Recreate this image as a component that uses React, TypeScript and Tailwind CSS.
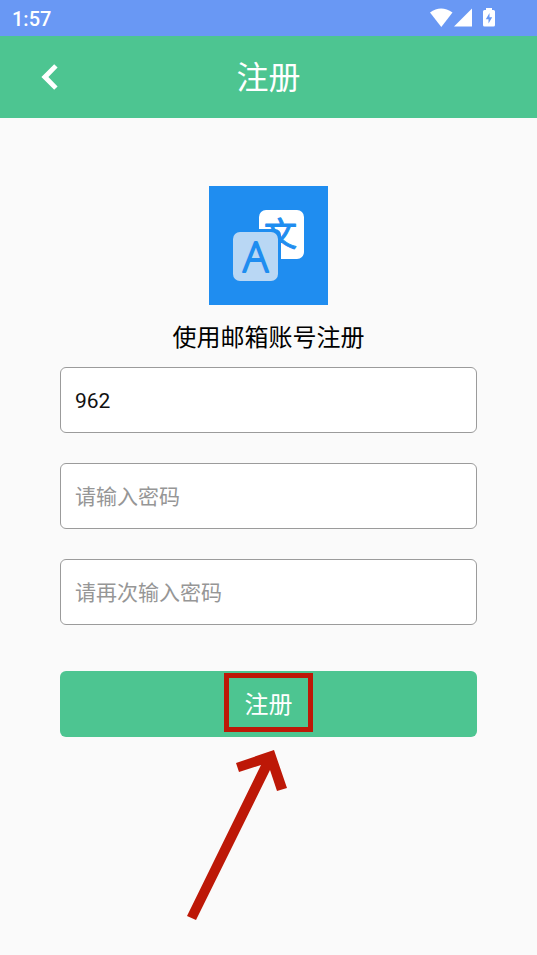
import { useState } from "react";

const fieldClass =
  "block h-[66px] w-full rounded-md border border-[#9b9b9b] bg-white px-3.5 pt-0.5 text-[21px] text-[#111111] outline-none placeholder:text-[#969696]";

function StatusBar() {
  return (
    <div className="flex h-9 items-center justify-between bg-[#6998f4] pt-0.5 pr-10 pl-3 text-white">
      <span className="text-xl font-medium">1:57</span>
      <svg className="mb-0.5 h-5 w-[68px]" viewBox="0 0 68 20" fill="currentColor" aria-hidden="true">
        <path d="M0.500 4.500Q11.500-3.500 23 4.500L11.800 19Z" transform="translate(0.500 0)" />
        <path d="M25 18.500L43 0.500V18.500Z" />
        <path
          fillRule="evenodd"
          d="M57 0h6v2h1.500a1.500 1.500 0 0 1 1.500 1.500v13.500a1.500 1.500 0 0 1-1.500 1.500h-9a1.500 1.500 0 0 1-1.500-1.500V3.500A1.500 1.500 0 0 1 55.500 2H57ZM60.500 5L56.800 11.300H59.500V15.500L63.200 9.300H60.500Z"
        />
      </svg>
    </div>
  );
}

function Header() {
  return (
    <header className="grid h-[82px] grid-cols-[1fr_auto_1fr] items-center bg-[#4dc591] px-10 text-white">
      <button type="button" aria-label="返回" className="flex h-10 w-10 items-center">
        <svg width="19" height="28" viewBox="0 0 19 28" fill="currentColor" aria-hidden="true">
          <path d="M14.200 1.200L17.600 4.600L8.400 14L17.600 23.400L14.200 26.800L1.400 14Z" />
        </svg>
      </button>
      <h1 className="pt-0.5 text-[32px] leading-10 font-normal">注册</h1>
    </header>
  );
}

function Logo() {
  return (
    <svg className="h-[119px] w-[119px]" viewBox="0 0 119 119" aria-hidden="true">
      <rect width="119" height="119" fill="#1f8df0" />
      <rect x="50" y="24" width="45" height="49" rx="7" fill="#ffffff" />
      <text
        x="71.500"
        y="60"
        textAnchor="middle"
        fontSize="33"
        fill="#1f8df0"
        stroke="#1f8df0"
        strokeWidth="1"
        strokeLinejoin="round"
        className="font-['Noto_Sans_CJK_SC',sans-serif]"
      >
        文
      </text>
      <path d="M21 43H66a6 6 0 0 1 6 6V98H21Z" fill="#1f8df0" />
      <rect x="24" y="46" width="45" height="49" rx="7" fill="#b9d7f4" />
      <text
        x="46.500"
        y="86"
        textAnchor="middle"
        fontSize="42"
        fontWeight="300"
        fill="#1f8df0"
        stroke="#1f8df0"
        strokeWidth="2"
        strokeLinejoin="round"
        className="font-['Open_Sans',sans-serif]"
      >
        A
      </text>
    </svg>
  );
}

export default function App() {
  const [account, setAccount] = useState("962");

  return (
    <div className="min-h-screen bg-[#fafafa] font-['Roboto','Noto_Sans_CJK_SC',sans-serif]">
      <StatusBar />
      <Header />
      <main className="px-[60px] pt-17 pb-10">
        <div className="flex flex-col items-center">
          <Logo />
          <h2 className="mt-4 text-2xl leading-[34px] font-normal text-black">使用邮箱账号注册</h2>
        </div>
        <form className="mt-3" onSubmit={(e) => e.preventDefault()}>
          <div className="flex flex-col gap-[30px]">
            <input
              type="text"
              aria-label="邮箱账号"
              className={fieldClass}
              value={account}
              onChange={(e) => setAccount(e.target.value)}
            />
            <input type="password" aria-label="密码" placeholder="请输入密码" className={fieldClass} />
            <input type="password" aria-label="确认密码" placeholder="请再次输入密码" className={fieldClass} />
          </div>
          <div className="relative mt-[46px]">
            <button type="submit" className="block h-[66px] w-full rounded-md bg-[#4dc591] pt-0.5 text-2xl text-white">
              注册
            </button>
            <div className="pointer-events-none absolute inset-x-0 top-0.5 flex flex-col items-center">
              <div className="h-[59px] w-[89px] border-5 border-[#bd1807]" />
              <svg className="mt-[18px] h-[171px] w-[165px]" viewBox="0 0 165 171" fill="#bd1807" aria-hidden="true">
                <path d="M88 0L50 13L53 22L75 15L1 166L10 170L84 20L91 41L101 38Z" />
              </svg>
            </div>
          </div>
        </form>
      </main>
    </div>
  );
}
